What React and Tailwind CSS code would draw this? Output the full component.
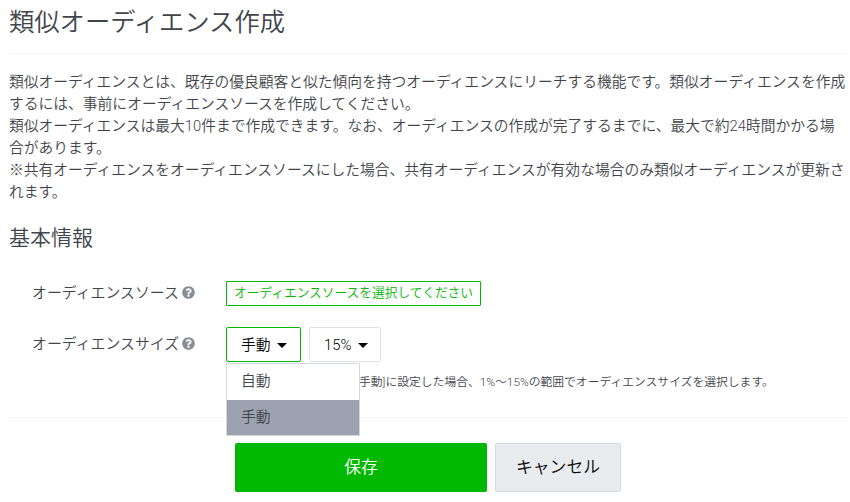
function HelpIcon() {
  return (
    <svg viewBox="0 0 512 512" className="ml-[3px] size-[13px] shrink-0 fill-[#868e96]">
      <path d="M504 256c0 137-111 248-248 248S8 393 8 256C8 119.100 119 8 256 8s248 111.100 248 248zM262.700 90c-54.500 0-89.300 23-116.500 63.800-3.500 5.300-2.400 12.400 2.700 16.300l34.700 26.300c5.200 3.900 12.600 3 16.700-2.100 17.900-22.700 30.100-35.800 57.300-35.800 20.400 0 45.700 13.100 45.700 33 0 15-12.400 22.700-32.500 34C247.100 238.500 216 254.900 216 296v4c0 6.600 5.400 12 12 12h56c6.600 0 12-5.400 12-12v-1.300c0-28.500 83.200-29.600 83.200-106.700 0-58-60.200-102-116.500-102zM256 338c-25.400 0-46 20.600-46 46 0 25.400 20.600 46 46 46s46-20.600 46-46c0-25.400-20.600-46-46-46z" />
    </svg>
  )
}

function Caret() {
  return (
    <svg viewBox="0 0 10 5" className="mt-px h-[5px] w-[10px] shrink-0 fill-black">
      <path d="M0 0h10L5 5z" />
    </svg>
  )
}

function FieldLabel({ children }) {
  return (
    <div className="flex w-[217px] shrink-0 items-center pb-[2px] pl-[23px]">
      <span className="text-[14.9px]">{children}</span>
      <HelpIcon />
    </div>
  )
}

export default function App() {
  return (
    <main className="flex h-[502px] w-[850px] flex-col overflow-hidden bg-white pr-[3px] pl-[9px] font-[Roboto,'Noto_Sans_CJK_JP',sans-serif] text-[14.77px] leading-[22px] font-[350] text-[#3f454b]">
      <h1 className="h-[54px] shrink-0 border-b border-[#f3f4f5] pt-[7px] text-[25.3px] leading-[32px]">類似オーディエンス作成</h1>

      <p className="mt-[17px] shrink-0 whitespace-nowrap">
        類似オーディエンスとは、既存の優良顧客と似た傾向を持つオーディエンスにリーチする機能です。類似オーディエンスを作成<br />
        するには、事前にオーディエンスソースを作成してください。<br />
        類似オーディエンスは最大10件まで作成できます。なお、オーディエンスの作成が完了するまでに、最大で約24時間かかる場<br />
        合があります。<br />
        ※共有オーディエンスをオーディエンスソースにした場合、共有オーディエンスが有効な場合のみ類似オーディエンスが更新さ<br />
        れます。
      </p>

      <h2 className="mt-[21px] shrink-0 text-[21px] leading-[28px]">基本情報</h2>

      <div className="mt-[29px] flex h-[25px] shrink-0 items-center">
        <FieldLabel>オーディエンスソース</FieldLabel>
        <button className="h-[25px] w-[255px] rounded-[1px] border border-[#00b900] pb-px text-[12.73px] leading-[22px] whitespace-nowrap text-[#00b900]">オーディエンスソースを選択してください</button>
      </div>

      <div className="mt-[21px] flex h-[35px] shrink-0 items-center">
        <FieldLabel>オーディエンスサイズ</FieldLabel>
        <div className="relative h-[35px]">
          <button className="flex h-[35px] w-[75px] items-center gap-[6px] rounded-[2px] border border-[#00b900] pl-[14px] text-black">
            手動
            <Caret />
          </button>
          <ul className="absolute top-[36px] left-0 z-10 w-[134px] rounded-[1px] border border-[#d4d7da] bg-white">
            <li className="h-[36px] pl-[14px] leading-[34px]">自動</li>
            <li className="h-[35px] bg-[#9ca2af] pl-[14px] leading-[34px]">手動</li>
          </ul>
        </div>
        <button className="ml-[8px] flex h-[35px] w-[72px] items-center gap-[7px] rounded-[2px] border border-[#dee2e6] pl-[14px] text-black">
          15%
          <Caret />
        </button>
      </div>

      <p className="mt-[11px] ml-[350px] h-[18px] shrink-0 text-[11.8px] leading-[18px] whitespace-nowrap">手動]に設定した場合、1%〜15%の範囲でオーディエンスサイズを選択します。</p>

      <footer className="mt-[26px] flex shrink-0 gap-[8px] border-t border-[#f3f4f5] pt-[25px] pl-[226px] text-[16.8px]">
        <button className="h-[49px] w-[252px] rounded-[2px] bg-[#00b900] pb-px font-[350] text-white">保存</button>
        <button className="h-[49px] w-[126px] rounded-[2px] border border-[#d5dade] bg-[#e9ecef] pb-px font-[350] text-black">キャンセル</button>
      </footer>
    </main>
  )
}
